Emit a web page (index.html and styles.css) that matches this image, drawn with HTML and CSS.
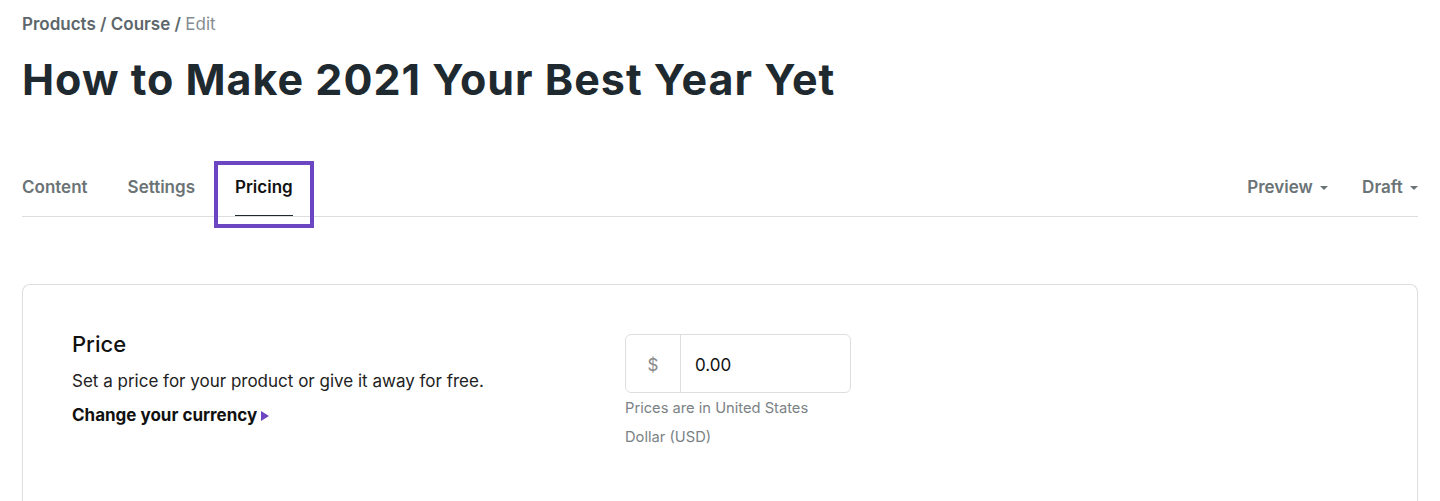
FILE: index.html
```html
<!DOCTYPE html>
<html lang="en">
<head>
    <meta charset="UTF-8">
    <meta name="viewport" content="width=device-width, initial-scale=1.0">
    <title>Edit Course - Pricing</title>
    <link rel="stylesheet" href="styles.css">
</head>
<body>

    <div class="page">
        <!-- Breadcrumb -->
        <div class="breadcrumb">
            <a href="#">Products</a> / <a href="#">Course</a> / <span class="current">Edit</span>
        </div>

        <h1 class="title">How to Make 2021 Your Best Year Yet</h1>

        <!-- Tabs -->
        <div class="tabs">
            <div class="tabs-left">
                <a href="#" class="tab">Content</a>
                <a href="#" class="tab">Settings</a>
                <a href="#" class="tab active">Pricing</a>
            </div>
            <div class="tabs-right">
                <a href="#" class="tab">Preview <span class="caret"></span></a>
                <a href="#" class="tab">Draft <span class="caret"></span></a>
            </div>
        </div>

        <!-- Price card -->
        <div class="card">
            <div class="card-info">
                <h2>Price</h2>
                <p>Set a price for your product or give it away for free.</p>
                <a href="#" class="currency-link">Change your currency <span class="arrow"></span></a>
            </div>
            <div class="price-field">
                <div class="input-group">
                    <span class="addon">$</span>
                    <input type="text" value="0.00">
                </div>
                <p class="help">Prices are in United States Dollar (USD)</p>
            </div>
        </div>
    </div>

</body>
</html>
```

FILE: styles.css
```css
body {
    margin: 0;
    font-family: Inter, "Noto Sans", sans-serif;
    background-color: #fff;
    color: #1f2a30;
}

a {
    text-decoration: none;
    color: inherit;
}

.page {
    padding: 12px 22px 0 22px;
}

.breadcrumb {
    font-size: 17px;
    line-height: 24px;
    font-weight: 600;
    color: #5d676b;
}

.breadcrumb .current {
    font-weight: 400;
    color: #858d91;
}

.title {
    margin: 17px 0 0 0;
    font-size: 43px;
    line-height: 52px;
    font-weight: 700;
    letter-spacing: 1px;
    color: #1f2a30;
}

.tabs {
    display: flex;
    justify-content: space-between;
    margin-top: 62px;
    border-bottom: 1px solid #dcdfe1;
}

.tabs-left {
    display: flex;
    gap: 40px;
}

.tabs-right {
    display: flex;
    gap: 34px;
}

.tab {
    display: block;
    font-size: 17px;
    font-weight: 600;
    line-height: 20px;
    color: #6a7376;
    padding: 10px 0 19px 0;
}

.tab.active {
    position: relative;
    color: #111;
}

.tab.active::after {
    content: "";
    position: absolute;
    left: 0;
    right: 0;
    bottom: 0;
    height: 1px;
    background-color: #1f2a30;
}

/* purple highlight box around the active tab */
.tab.active::before {
    content: "";
    position: absolute;
    left: -21px;
    right: -21px;
    top: -6px;
    bottom: -12px;
    border: 4px solid #6c45c2;
}

.caret {
    display: inline-block;
    width: 0;
    height: 0;
    margin-left: 3px;
    vertical-align: middle;
    border-left: 4px solid transparent;
    border-right: 4px solid transparent;
    border-top: 4px solid #6a7376;
}

.card {
    display: flex;
    margin-top: 67px;
    border: 1px solid #dcdfe1;
    border-bottom: none;
    border-radius: 8px 8px 0 0;
    padding: 45px 49px 0 49px;
    height: 200px;
}

.card-info {
    width: 553px;
}

.card-info h2 {
    margin: 0;
    font-size: 22px;
    font-weight: 500;
    line-height: 28px;
    color: #111;
}

.card-info p {
    margin: 11px 0 0 0;
    font-size: 17px;
    line-height: 24px;
    color: #222;
}

.currency-link {
    display: inline-block;
    margin-top: 10px;
    font-size: 17px;
    font-weight: 700;
    line-height: 24px;
    color: #111;
}

.arrow {
    display: inline-block;
    width: 0;
    height: 0;
    margin-left: 0;
    vertical-align: 0;
    border-top: 5px solid transparent;
    border-bottom: 5px solid transparent;
    border-left: 8px solid #6c45c2;
}

.price-field {
    width: 226px;
    padding-top: 4px;
}

.input-group {
    display: flex;
    height: 59px;
    border: 1px solid #dcdfe1;
    border-radius: 6px;
    box-sizing: border-box;
}

.addon {
    width: 54px;
    display: flex;
    align-items: center;
    justify-content: center;
    border-right: 1px solid #dcdfe1;
    color: #888;
    font-size: 17px;
    padding-top: 2px;
}

.input-group input {
    flex: 1;
    min-width: 0;
    border: none;
    outline: none;
    background: transparent;
    padding: 2px 14px 0 14px;
    font-family: inherit;
    font-size: 17px;
    color: #111;
}

.help {
    margin: 1px 0 0 0;
    font-size: 14.7px;
    line-height: 29px;
    color: #7b8285;
}
```
